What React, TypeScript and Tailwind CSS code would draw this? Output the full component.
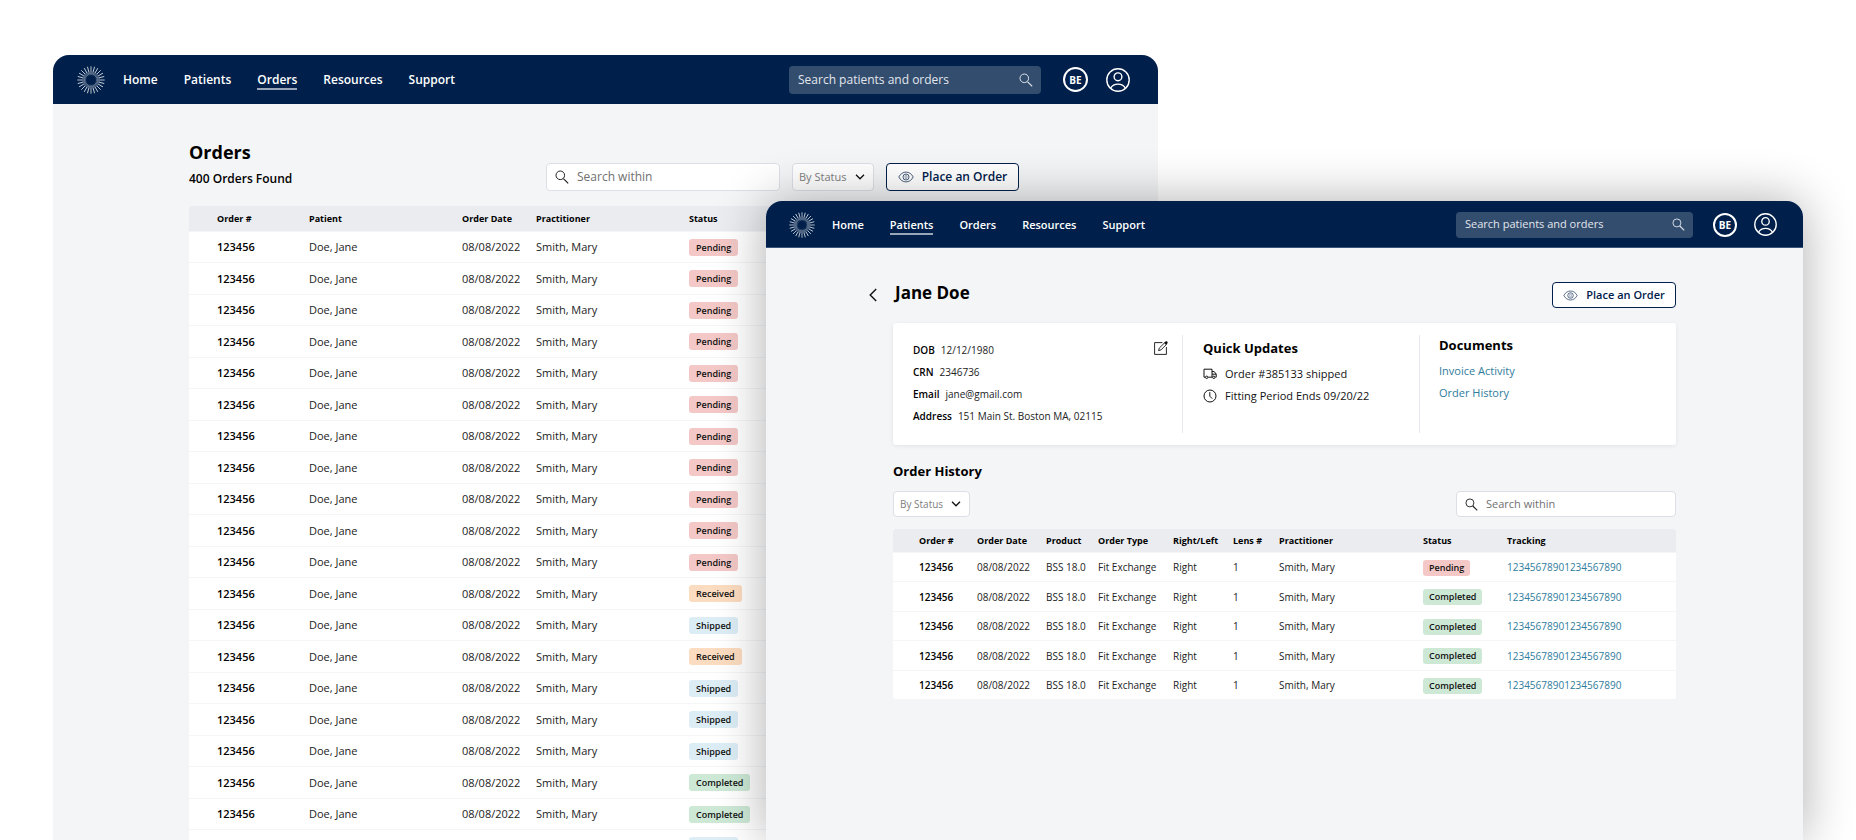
import { useId, type ReactNode } from "react";
import clsx from "clsx";

type Size = "lg" | "md";
type Status = "Pending" | "Received" | "Shipped" | "Completed";

const RAYS = Array.from({ length: 24 }, (_, i) => i * 15);

function Logo({ className }: { className: string }) {
  return (
    <svg viewBox="0 0 28 28" className={className} fill="none" stroke="#fff" aria-hidden="true">
      {RAYS.map((a) => (
        <g key={a} transform={`rotate(${a} 14 14)`}>
          <path d="M14 0.3V5.6" strokeWidth="0.9" opacity="0.8" />
          <path d="M14 5.2V9" strokeWidth="0.7" opacity="0.45" transform="rotate(7.5 14 14)" />
          <path d="M14 5.6V8" strokeWidth="0.7" opacity="0.45" />
        </g>
      ))}
    </svg>
  );
}

function SearchIcon({ className }: { className: string }) {
  return (
    <svg viewBox="0 0 14 14" className={className} fill="none" stroke="currentColor" aria-hidden="true">
      <circle cx="5.3" cy="5.3" r="4.3" />
      <path d="M8.4 8.6L13.2 13.4" strokeWidth="1.2" />
    </svg>
  );
}

function EyeIcon({ className }: { className: string }) {
  return (
    <svg viewBox="0 0 16 12" className={className} fill="none" stroke="currentColor" strokeWidth="0.7" aria-hidden="true">
      <path d="M0.8 6C2.4 2.8 5 1.1 8 1.1S13.6 2.8 15.2 6C13.6 9.2 11 10.9 8 10.9S2.4 9.2 0.8 6Z" />
      <circle cx="8" cy="6" r="3" />
      <ellipse cx="8" cy="6" rx="1" ry="1.7" strokeWidth="0.4" />
    </svg>
  );
}

function ChevronDown({ className }: { className: string }) {
  return (
    <svg viewBox="0 0 10 6" className={className} fill="none" stroke="currentColor" strokeWidth="1.3" aria-hidden="true">
      <path d="M1 0.8L5 4.8L9 0.8" />
    </svg>
  );
}

function UserIcon({ className }: { className: string }) {
  return (
    <svg viewBox="0 0 24 24" className={className} fill="none" stroke="#fff" strokeWidth="1.4" aria-hidden="true">
      <circle cx="12" cy="12" r="11.2" />
      <circle cx="12" cy="8.8" r="3.9" />
      <path d="M4.6 20.2C6.2 17.4 9 16.1 12 16.1S17.8 17.4 19.4 20.2" />
    </svg>
  );
}

function EditIcon() {
  return (
    <svg viewBox="0 0 14 14" className="size-3.5" fill="none" stroke="#111" aria-hidden="true">
      <path d="M8.4 1.6H0.6V13.4H12.4V6" strokeWidth="0.9" />
      <path d="M4.6 9.6L5.2 7.2L10.6 1.8L12.4 3.5L7 8.9Z" strokeWidth="0.9" />
      <path d="M10.2 2.1L11.6 0.6C12.1 0.1 12.8 0.2 13.3 0.7C13.8 1.2 13.8 1.9 13.3 2.4L11.9 3.8Z" fill="#111" stroke="none" />
    </svg>
  );
}

function TruckIcon() {
  return (
    <svg viewBox="0 0 14 12" className="h-3 w-3.5 shrink-0" fill="none" stroke="#111" strokeWidth="1" aria-hidden="true">
      <path d="M2.2 9.2H1V1.2H9V9.2H5.2M9 3.6H11.2L13.2 6V9.2H12.4M9 6.2H13" />
      <circle cx="3.7" cy="9.3" r="1.2" />
      <circle cx="10.8" cy="9.3" r="1.2" />
    </svg>
  );
}

function ClockIcon() {
  return (
    <svg viewBox="0 0 14 14" className="size-3.5 shrink-0" fill="none" stroke="#111" strokeWidth="1" aria-hidden="true">
      <circle cx="7" cy="7" r="6" />
      <path d="M6.8 3.2V7.2L9.2 9.6" />
    </svg>
  );
}

const NAV = ["Home", "Patients", "Orders", "Resources", "Support"];

function TopBar({ active, size }: { active: string; size: Size }) {
  const id = useId();
  const lg = size === "lg";
  return (
    <header
      className={clsx(
        "flex shrink-0 items-center bg-[#00204b] text-white",
        lg ? "h-[49px] pl-6 pr-7" : "h-[47px] pl-[23px] pr-[26px] shadow-[inset_0_-1px_0_#3d5578]",
      )}
    >
      <Logo className={lg ? "size-7" : "size-[26px]"} />
      <nav className={clsx("flex gap-[26px] font-semibold", lg ? "ml-[18px] text-[12px]" : "ml-[17px] text-[11px]")}>
        {NAV.map((item) => (
          <a
            key={item}
            href={`#${item.toLowerCase()}`}
            aria-current={item === active ? "page" : undefined}
            className={clsx("border-y-2 border-t-transparent leading-4", item === active ? "border-b-[#99a6b7]" : "border-b-transparent")}
          >
            {item}
          </a>
        ))}
      </nav>
      <div
        className={clsx(
          "ml-auto flex items-center rounded-sm bg-[#334d6f] pl-[9px] pr-2",
          lg ? "h-7 w-[252px] text-[12px]" : "h-[26px] w-[237px] text-[11px]",
        )}
      >
        <label htmlFor={id} className="sr-only">Search patients and orders</label>
        <input
          id={id}
          type="search"
          placeholder="Search patients and orders"
          className="min-w-0 flex-1 bg-transparent outline-none placeholder:text-[#e3e7ec] placeholder:opacity-100"
        />
        <SearchIcon className={clsx("shrink-0 text-[#dfe4ea]", lg ? "size-3.5" : "size-[13px]")} />
      </div>
      <button
        type="button"
        className={clsx(
          "flex items-center justify-center rounded-full border-2 border-white text-[10px] font-bold leading-none",
          lg ? "ml-[22px] size-[25px]" : "ml-5 size-6",
        )}
      >
        BE
      </button>
      <button type="button" aria-label="Account" className={lg ? "ml-[18px]" : "ml-[17px]"}>
        <UserIcon className={lg ? "size-6" : "size-[23px]"} />
      </button>
    </header>
  );
}

function SearchWithin({ size }: { size: Size }) {
  const id = useId();
  const lg = size === "lg";
  return (
    <div
      className={clsx(
        "flex items-center gap-2 rounded-sm border border-[#dcdfe6] bg-white px-2",
        lg ? "h-7 w-[234px] text-[12px]" : "h-[26px] w-[220px] text-[11px]",
      )}
    >
      <SearchIcon className={clsx("shrink-0 text-[#222]", lg ? "size-3.5" : "size-[13px]")} />
      <label htmlFor={id} className="sr-only">Search within</label>
      <input
        id={id}
        type="search"
        placeholder="Search within"
        className="min-w-0 flex-1 bg-transparent outline-none placeholder:text-[#707070] placeholder:opacity-100"
      />
    </div>
  );
}

function StatusFilter({ size }: { size: Size }) {
  const id = useId();
  const lg = size === "lg";
  return (
    <div className="grid items-center rounded-sm border border-[#dcdfe6] bg-white">
      <label htmlFor={id} className="sr-only">Filter by status</label>
      <select
        id={id}
        className={clsx(
          "col-start-1 row-start-1 appearance-none bg-transparent pl-1.5 text-[#808080] outline-none",
          lg ? "h-[26px] w-20 text-[11px]" : "h-6 w-[75px] text-[10px]",
        )}
      >
        <option>By Status</option>
      </select>
      <ChevronDown className="pointer-events-none col-start-1 row-start-1 mr-2 h-1.5 w-2.5 justify-self-end text-[#111]" />
    </div>
  );
}

function PlaceOrder({ size }: { size: Size }) {
  const lg = size === "lg";
  return (
    <button
      type="button"
      className={clsx(
        "flex items-center justify-center gap-2 whitespace-nowrap rounded-sm border border-[#00204b] bg-white font-semibold text-[#00204b]",
        lg ? "h-7 w-[133px] text-[12px]" : "h-[26px] w-[124px] text-[11px]",
      )}
    >
      <EyeIcon className={lg ? "h-3 w-4" : "h-[11px] w-[15px]"} />
      Place an Order
    </button>
  );
}

const BADGE: Record<Status, string> = {
  Pending: "bg-[#f3c8c7]",
  Received: "bg-[#fcdcc0]",
  Shipped: "bg-[#dcedf6]",
  Completed: "bg-[#cde9d6]",
};

function Badge({ status, size }: { status: Status; size: Size }) {
  return (
    <span
      className={clsx(
        "inline-block rounded-[3px] align-middle text-[9px] font-semibold text-[#111]",
        size === "lg" ? "px-[7px] leading-[17px]" : "px-1.5 leading-4",
        BADGE[status],
      )}
    >
      {status}
    </span>
  );
}

const ORDERS: Status[] = [
  ...Array<Status>(11).fill("Pending"),
  "Received",
  "Shipped",
  "Received",
  "Shipped",
  "Shipped",
  "Shipped",
  "Completed",
  "Completed",
  "Shipped",
];

function Th({ children, className }: { children: ReactNode; className?: string }) {
  return <th scope="col" className={clsx("p-0 text-left font-bold", className)}>{children}</th>;
}

function Td({ children, className }: { children: ReactNode; className?: string }) {
  return <td className={clsx("p-0 align-middle", className)}>{children}</td>;
}

function OrdersWindow() {
  return (
    <section className="absolute bottom-0 left-[53px] right-[698px] top-[55px] flex flex-col overflow-hidden rounded-t-2xl bg-[#f4f5f7]">
      <TopBar active="Orders" size="lg" />
      <main className="ml-[136px] mr-[139px] pt-9">
        <div className="flex items-end">
          <div className="mr-auto flex flex-col gap-[5px] pb-0.5">
            <h1 className="text-[18px] font-bold leading-6">Orders</h1>
            <p className="text-[12px] font-semibold leading-5">400 Orders Found</p>
          </div>
          <div className="flex gap-3">
            <SearchWithin size="lg" />
            <StatusFilter size="lg" />
            <PlaceOrder size="lg" />
          </div>
        </div>
        <table className="mt-[15px] w-full table-fixed border-separate border-spacing-0 overflow-hidden rounded-t-[3px] bg-white text-[11px] leading-4 text-[#222]">
          <colgroup>
            <col className="w-[120px]" />
            <col className="w-[153px]" />
            <col className="w-[74px]" />
            <col className="w-[153px]" />
            <col />
          </colgroup>
          <thead>
            <tr className="h-[25px] bg-[#ebecf0] text-[9px] text-black">
              <Th className="pl-7">Order #</Th>
              <Th>Patient</Th>
              <Th>Order Date</Th>
              <Th>Practitioner</Th>
              <Th>Status</Th>
            </tr>
          </thead>
          <tbody>
            {ORDERS.map((status, i) => (
              <tr key={i} className="odd:h-[31px] even:h-8 *:border-t *:border-[#f4f5f7]">
                <Td className="pl-7 font-semibold text-black">123456</Td>
                <Td>Doe, Jane</Td>
                <Td>08/08/2022</Td>
                <Td>Smith, Mary</Td>
                <Td><Badge status={status} size="lg" /></Td>
              </tr>
            ))}
          </tbody>
        </table>
      </main>
    </section>
  );
}

const DETAILS = [
  ["DOB", "12/12/1980"],
  ["CRN", "2346736"],
  ["Email", "jane@gmail.com"],
  ["Address", "151 Main St. Boston MA, 02115"],
];

const HISTORY: Status[] = ["Pending", "Completed", "Completed", "Completed", "Completed"];

function PatientWindow() {
  return (
    <section className="absolute bottom-0 left-[766px] right-[53px] top-[201px] flex flex-col rounded-t-2xl bg-[#f4f5f7] shadow-[0_0_50px_rgba(0,0,0,0.32)]">
      <div className="overflow-hidden rounded-t-2xl">
        <TopBar active="Patients" size="md" />
      </div>
      <main className="mx-[127px] pt-[34px]">
        <div className="-ml-6 flex items-start">
          <button type="button" aria-label="Back" className="mr-[18px] py-1.5">
            <svg viewBox="0 0 8 14" className="h-3.5 w-2" fill="none" stroke="#111" strokeWidth="1.4" aria-hidden="true">
              <path d="M7.2 1L1.2 7L7.2 13" />
            </svg>
          </button>
          <h1 className="mr-auto text-[17px] font-bold leading-[22px]">Jane Doe</h1>
          <PlaceOrder size="md" />
        </div>

        <div className="mt-[15px] flex h-[122px] rounded-[3px] bg-white py-3 shadow-[0_1px_4px_rgba(0,0,0,0.08)]">
          <div className="flex w-[290px] items-start justify-between border-r border-[#e6e8ed] pl-5 pr-[14px] pt-1">
            <dl className="text-[10px] leading-[22px]">
              {DETAILS.map(([term, value]) => (
                <div key={term} className="flex gap-1.5">
                  <dt className="font-semibold text-black">{term}</dt>
                  <dd className="text-[#222]">{value}</dd>
                </div>
              ))}
            </dl>
            <button type="button" aria-label="Edit patient" className="mt-0.5">
              <EditIcon />
            </button>
          </div>
          <div className="w-[237px] border-r border-[#e6e8ed] pl-5 pt-[3px]">
            <h2 className="text-[13px] font-bold leading-5">Quick Updates</h2>
            <ul className="mt-[5px] text-[11px] leading-[22px] text-[#111]">
              <li className="flex items-center gap-2"><TruckIcon />Order #385133 shipped</li>
              <li className="flex items-center gap-2"><ClockIcon />Fitting Period Ends 09/20/22</li>
            </ul>
          </div>
          <div className="pl-[19px]">
            <h2 className="text-[13px] font-bold leading-5">Documents</h2>
            <ul className="mt-[5px] text-[11px] leading-[22px] text-[#2f7c9d]">
              <li><a href="#invoices">Invoice Activity</a></li>
              <li><a href="#history">Order History</a></li>
            </ul>
          </div>
        </div>

        <h2 className="mt-4 text-[13px] font-bold leading-5">Order History</h2>
        <div className="mt-[10px] flex justify-between">
          <StatusFilter size="md" />
          <SearchWithin size="md" />
        </div>

        <table className="mt-3 w-full table-fixed border-separate border-spacing-0 overflow-hidden rounded-[3px] bg-white text-[10px] leading-4 text-[#222]">
          <colgroup>
            <col className="w-[84px]" />
            <col className="w-[69px]" />
            <col className="w-[52px]" />
            <col className="w-[75px]" />
            <col className="w-[60px]" />
            <col className="w-[46px]" />
            <col className="w-36" />
            <col className="w-[84px]" />
            <col />
          </colgroup>
          <thead>
            <tr className="h-[23px] bg-[#ebecf0] text-[9px] text-black">
              <Th className="pl-[26px]">Order #</Th>
              <Th>Order Date</Th>
              <Th>Product</Th>
              <Th>Order Type</Th>
              <Th>Right/Left</Th>
              <Th>Lens #</Th>
              <Th>Practitioner</Th>
              <Th>Status</Th>
              <Th>Tracking</Th>
            </tr>
          </thead>
          <tbody>
            {HISTORY.map((status, i) => (
              <tr key={i} className="odd:h-[29px] even:h-[30px] *:border-t *:border-[#f4f5f7]">
                <Td className="pl-[26px] font-semibold text-black">123456</Td>
                <Td>08/08/2022</Td>
                <Td>BSS 18.0</Td>
                <Td>Fit Exchange</Td>
                <Td>Right</Td>
                <Td>1</Td>
                <Td>Smith, Mary</Td>
                <Td><Badge status={status} size="md" /></Td>
                <Td className="text-[#2f7c9d]"><a href="#tracking">12345678901234567890</a></Td>
              </tr>
            ))}
          </tbody>
        </table>
      </main>
    </section>
  );
}

export default function App() {
  return (
    <div className="relative h-screen w-full overflow-hidden bg-white font-['Open_Sans','Noto_Sans',sans-serif] text-black">
      <OrdersWindow />
      <PatientWindow />
    </div>
  );
}
